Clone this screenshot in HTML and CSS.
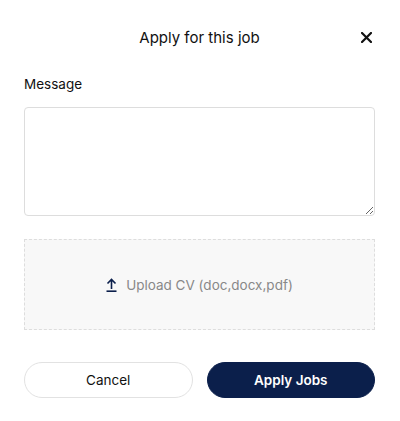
FILE: index.html
```html
<!DOCTYPE html>
<html>
<head>
<meta charset="utf-8">
<link rel="stylesheet" href="styles.css">
</head>
<body>
<div class="modal">
  <div class="header">
    <h2 class="title">Apply for this job</h2>
    <button class="close" aria-label="Close">
      <svg width="11" height="11" viewBox="0 0 11 11"><path d="M1 1L10 10M10 1L1 10" stroke="#111" stroke-width="2.2" stroke-linecap="square"/></svg>
    </button>
  </div>
  <label class="label">Message</label>
  <textarea class="message"></textarea>
  <div class="upload">
    <svg class="upload-icon" width="11" height="14" viewBox="0 0 11 14"><path d="M5.5 11V2M1.5 5.5L5.5 1.5L9.5 5.5" fill="none" stroke="#0b1f4b" stroke-width="1.6"/><path d="M0.5 13.2H10.5" stroke="#0b1f4b" stroke-width="1.6"/></svg>
    <span class="upload-text">Upload CV (doc,docx,pdf)</span>
  </div>
  <div class="actions">
    <button class="btn cancel">Cancel</button>
    <button class="btn apply">Apply Jobs</button>
  </div>
</div>
</body>
</html>
```
FILE: styles.css
```css
html, body {
  margin: 0;
  background: #fff;
}
body {
  font-family: "Inter", "Noto Sans", sans-serif;
  color: #111;
}
.modal {
  padding: 0 25px 0 24px;
  display: flex;
  flex-direction: column;
}
.header {
  position: relative;
  height: 22px;
  margin-top: 27px;
  display: flex;
  justify-content: center;
  align-items: center;
}
.title {
  margin: 0;
  font-size: 15px;
  font-weight: 400;
  line-height: 22px;
}
.close {
  position: absolute;
  right: 3px;
  top: 5px;
  border: 0;
  background: none;
  padding: 0;
  width: 11px;
  height: 11px;
  display: flex;
}
.label {
  margin-top: 25px;
  font-size: 13.5px;
  line-height: 20px;
}
.message {
  margin-top: 13px;
  box-sizing: border-box;
  width: 100%;
  height: 109px;
  border: 1px solid #ddd;
  border-radius: 4px;
  resize: vertical;
  font-family: inherit;
}
.upload {
  margin-top: 23px;
  height: 91px;
  box-sizing: border-box;
  border: 1px dashed #ddd;
  background: #f8f8f8;
  display: flex;
  align-items: center;
  justify-content: center;
  gap: 9px;
}
.upload-icon {
  display: block;
}
.upload-text {
  color: #888;
  font-size: 13.5px;
}
.actions {
  margin-top: 32px;
  display: flex;
  gap: 14px;
}
.btn {
  flex: 1;
  height: 36px;
  border-radius: 18px;
  font-family: inherit;
  font-size: 13.5px;
}
.cancel {
  background: #fff;
  border: 1px solid #e2e2e2;
  color: #111;
}
.apply {
  background: #0b1f4b;
  border: 1px solid #0b1f4b;
  color: #fff;
  font-weight: 600;
}
```
